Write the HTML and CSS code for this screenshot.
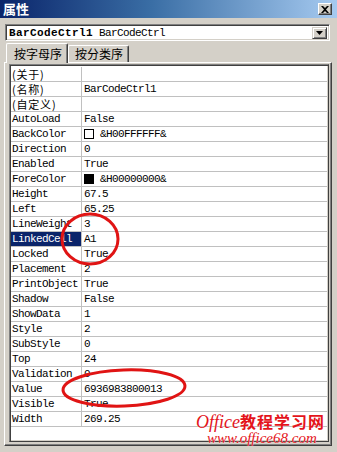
FILE: index.html
```html
<!DOCTYPE html>
<html lang="zh">

<head>
    <meta charset="UTF-8">
    <meta name="viewport" content="width=device-width, initial-scale=1.0">
    <title>属性</title>
    <link rel="stylesheet" href="styles.css">
</head>

<body>
    <div class="window">
        <div class="titlebar">
            <span class="title">属性</span>
            <span class="close-btn">
                <svg width="8" height="7" viewBox="0 0 8 7"><path d="M0 0h2l2 2 2-2h2L5 3.5 8 7H6L4 5 2 7H0l3-3.5z" fill="#000"/></svg>
            </span>
        </div>

        <div class="content">
            <div class="combo">
                <span class="combo-text"><b>BarCodeCtrl1</b> BarCodeCtrl</span>
                <span class="drop-btn">
                    <svg width="7" height="4" viewBox="0 0 7 4"><path d="M0 0h7L3.5 4z" fill="#000"/></svg>
                </span>
            </div>

            <div class="tabs">
                <div class="tab tab-active">按字母序</div>
                <div class="tab">按分类序</div>
            </div>

            <div class="panel">
                <div class="grid">
                    <div class="row"><div class="name cjk">(关于)</div><div class="val"></div></div>
                    <div class="row"><div class="name cjk">(名称)</div><div class="val">BarCodeCtrl1</div></div>
                    <div class="row"><div class="name cjk">(自定义)</div><div class="val"></div></div>
                    <div class="row"><div class="name">AutoLoad</div><div class="val">False</div></div>
                    <div class="row"><div class="name">BackColor</div><div class="val"><span class="swatch"></span>&amp;H00FFFFFF&amp;</div></div>
                    <div class="row"><div class="name">Direction</div><div class="val">0</div></div>
                    <div class="row"><div class="name">Enabled</div><div class="val">True</div></div>
                    <div class="row"><div class="name">ForeColor</div><div class="val"><span class="swatch swatch-black"></span>&amp;H00000000&amp;</div></div>
                    <div class="row"><div class="name">Height</div><div class="val">67.5</div></div>
                    <div class="row"><div class="name">Left</div><div class="val">65.25</div></div>
                    <div class="row"><div class="name">LineWeight</div><div class="val">3</div></div>
                    <div class="row"><div class="name selected">LinkedCell</div><div class="val">A1</div></div>
                    <div class="row"><div class="name">Locked</div><div class="val">True</div></div>
                    <div class="row"><div class="name">Placement</div><div class="val">2</div></div>
                    <div class="row"><div class="name">PrintObject</div><div class="val">True</div></div>
                    <div class="row"><div class="name">Shadow</div><div class="val">False</div></div>
                    <div class="row"><div class="name">ShowData</div><div class="val">1</div></div>
                    <div class="row"><div class="name">Style</div><div class="val">2</div></div>
                    <div class="row"><div class="name">SubStyle</div><div class="val">0</div></div>
                    <div class="row"><div class="name">Top</div><div class="val">24</div></div>
                    <div class="row"><div class="name">Validation</div><div class="val">0</div></div>
                    <div class="row"><div class="name">Value</div><div class="val">6936983800013</div></div>
                    <div class="row"><div class="name">Visible</div><div class="val">True</div></div>
                    <div class="row"><div class="name">Width</div><div class="val">269.25</div></div>
                </div>
            </div>
        </div>

        <!-- red marks drawn over the screenshot -->
        <svg class="marks" width="337" height="452" viewBox="0 0 337 452">
            <ellipse cx="90" cy="239" rx="28" ry="25" fill="none" stroke="#e01414" stroke-width="3"/>
            <ellipse cx="124" cy="388" rx="61" ry="18" fill="none" stroke="#e01414" stroke-width="3" transform="rotate(-2 124 388)"/>
        </svg>

        <div class="watermark">
            <div class="wm-top"><span class="wm-office">Office</span><span class="wm-cn">教程学习网</span></div>
            <div class="wm-url">www.office68.com</div>
        </div>
    </div>
</body>

</html>
```

FILE: styles.css
```css
html {
    box-sizing: border-box;
    font-size: 12px;
}

*,
*:before,
*:after {
    box-sizing: inherit;
}

body {
    margin: 0;
    background: #d4d0c8;
}

.window {
    position: relative;
    width: 337px;
    height: 452px;
    overflow: hidden;
    background: #d4d0c8;
    font-family: "Liberation Mono", "Noto Sans CJK SC", monospace;
}

/******* Barra de titulo ********/
.titlebar {
    display: flex;
    align-items: center;
    justify-content: space-between;
    height: 18px;
    padding: 0 5px 0 3px;
    background: linear-gradient(to right, #0a246a, #3a6ea5 45%, #a6caf0);
}

.title {
    color: #fff;
    font-family: "Noto Sans CJK SC", sans-serif;
    font-weight: bold;
    font-size: 13px;
    line-height: 16px;
}

.close-btn {
    display: flex;
    align-items: center;
    justify-content: center;
    width: 14px;
    height: 12px;
    background: #d4d0c8;
    border: 1px solid;
    border-color: #fff #404040 #404040 #fff;
    box-shadow: inset -1px -1px 0 #808080;
}

.content {
    padding: 6px 7px 0 4px;
}

/******* Combo ********/
.combo {
    display: flex;
    align-items: center;
    justify-content: space-between;
    height: 17px;
    margin-left: 1px;
    background: #fff;
    border: 1px solid;
    border-color: #808080 #fff #fff #808080;
    box-shadow: inset 1px 1px 0 #404040, inset -1px -1px 0 #d4d0c8;
    padding: 0 2px 0 3px;
}

.combo-text {
    font-size: 11px;
    letter-spacing: -0.6px;
    line-height: 14px;
    white-space: pre;
}

.combo-text b {
    letter-spacing: 0.4px;
}

.drop-btn {
    display: flex;
    align-items: center;
    justify-content: center;
    width: 15px;
    height: 12px;
    background: #d4d0c8;
    border: 1px solid;
    border-color: #d4d0c8 #404040 #404040 #d4d0c8;
    box-shadow: inset 1px 1px 0 #fff, inset -1px -1px 0 #808080;
}

/******* Pestañas ********/
.tabs {
    display: flex;
    align-items: flex-end;
    height: 19px;
    margin-top: 2px;
    padding-left: 2px;
}

.tab {
    height: 17px;
    padding: 0 5px 0 6px;
    font-family: "Noto Sans CJK SC", sans-serif;
    font-size: 12px;
    line-height: 16px;
    white-space: nowrap;
    border: 1px solid;
    border-bottom: none;
    border-color: #fff #404040 #fff #fff;
    box-shadow: inset -1px 0 0 #808080;
    border-radius: 2px 2px 0 0;
}

.tab-active {
    height: 20px;
    padding: 0 5px 0 7px;
    line-height: 19px;
    margin-bottom: -1px;
    position: relative;
    background: #d4d0c8;
    z-index: 1;
}

/******* Tabla de propiedades ********/
.panel {
    width: 328px;
    height: 384px;
    border: 1px solid;
    border-color: #fff #404040 #404040 #fff;
    box-shadow: inset -1px -1px 0 #808080;
    padding: 1px 2px 3px 4px;
}

.grid {
    height: 378px;
    background: #fff;
    border: 1px solid;
    border-color: #808080 #404040 #404040 #808080;
    box-shadow: inset 1px 1px 0 #404040, inset -1px -1px 0 #d4d0c8;
    padding: 2px 1px 0 1px;
}

.row {
    display: flex;
    height: 15px;
    border-bottom: 1px solid #c0c0c0;
}

.name {
    width: 71px;
    flex-shrink: 0;
    padding-left: 1px;
    border-right: 1px solid #c0c0c0;
    font-size: 11px;
    letter-spacing: -0.6px;
    line-height: 14px;
    white-space: nowrap;
    color: #000;
}

.cjk {
    display: flex;
    align-items: center;
    font-family: "Noto Sans CJK SC", sans-serif;
    font-size: 11px;
    letter-spacing: 0.8px;
    line-height: 12px;
}

.selected {
    background: #0a246a;
    color: #fff;
}

.val {
    display: flex;
    align-items: center;
    padding-left: 2px;
    font-size: 11px;
    letter-spacing: -0.6px;
    line-height: 14px;
    white-space: nowrap;
}

.swatch {
    display: inline-block;
    width: 10px;
    height: 10px;
    margin-right: 6px;
    background: #fff;
    border: 1px solid #000;
}

.swatch-black {
    background: #000;
}

/******* Marcas encima ********/
.marks {
    position: absolute;
    left: 0;
    top: 0;
    pointer-events: none;
}

.watermark {
    position: absolute;
    left: 196px;
    top: 412px;
    color: #e4141b;
    text-shadow: 0 0 1px #fff;
}

.wm-top {
    display: flex;
    align-items: baseline;
    height: 19px;
    line-height: 19px;
}

.wm-office {
    font-family: "Liberation Serif", serif;
    font-style: italic;
    font-size: 18px;
}

.wm-cn {
    font-family: "Noto Sans CJK SC", sans-serif;
    font-weight: bold;
    font-size: 16px;
    line-height: 19px;
    letter-spacing: 1px;
}

.wm-url {
    margin-left: 11px;
    margin-top: 1px;
    font-family: "Liberation Serif", serif;
    font-style: italic;
    font-size: 15px;
    line-height: 13px;
}
```
